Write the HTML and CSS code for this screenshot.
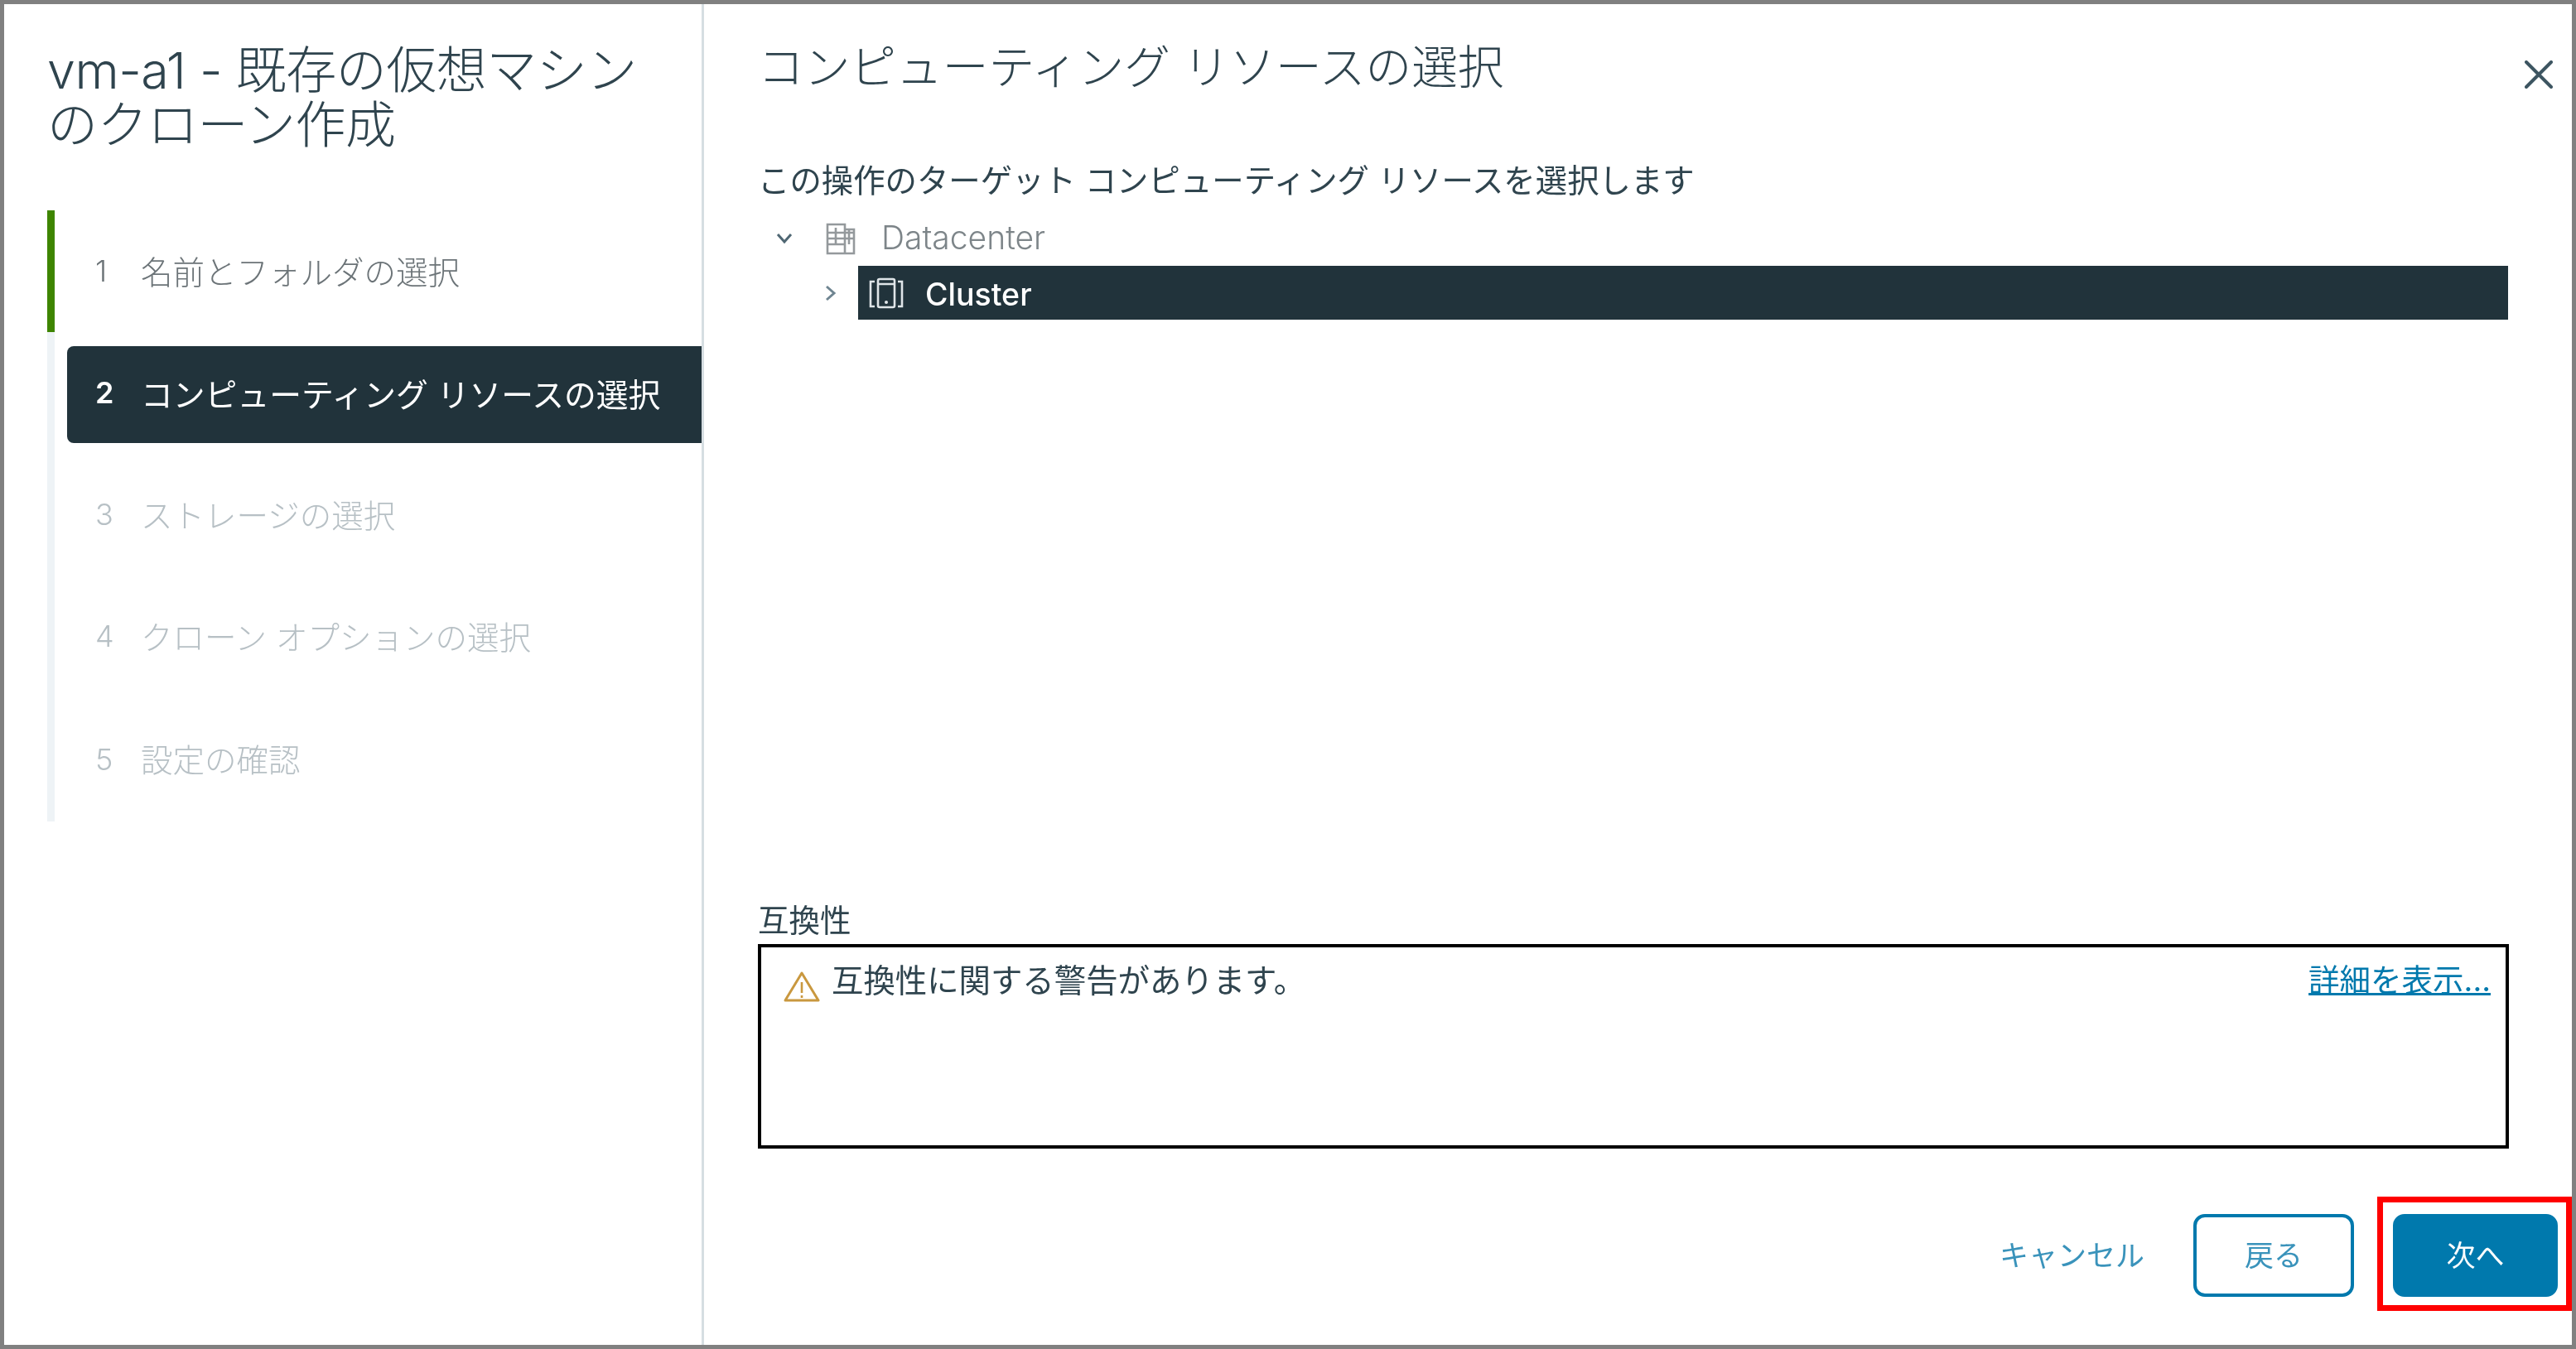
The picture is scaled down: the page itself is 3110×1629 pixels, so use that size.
FILE: index.html
```html
<!DOCTYPE html>
<html lang="ja">
<head>
<meta charset="utf-8">
<title>vm-a1 - 既存の仮想マシンのクローン作成</title>
<link rel="stylesheet" href="styles.css">
</head>
<body>
<div class="frame">
  <aside class="side">
    <h1 class="side-title">vm-a1 - 既存の仮想マシンのクローン作成</h1>
    <ol class="steps">
      <li class="step done"><div class="step-inner"><span class="num">1</span><span>名前とフォルダの選択</span></div></li>
      <li class="step active"><div class="step-inner"><span class="num">2</span><span>コンピューティング リソースの選択</span></div></li>
      <li class="step off"><div class="step-inner"><span class="num">3</span><span>ストレージの選択</span></div></li>
      <li class="step off"><div class="step-inner"><span class="num">4</span><span>クローン オプションの選択</span></div></li>
      <li class="step off"><div class="step-inner"><span class="num">5</span><span>設定の確認</span></div></li>
    </ol>
  </aside>
  <main class="main">
    <header class="head">
      <h2 class="head-title">コンピューティング リソースの選択</h2>
      <svg class="close" viewBox="0 0 34 34" width="34" height="34"><path d="M2 2 L32 32 M32 2 L2 32" fill="none" stroke="#3d5561" stroke-width="4" stroke-linecap="round"/></svg>
    </header>
    <div class="content">
      <p class="desc">この操作のターゲット コンピューティング リソースを選択します</p>
      <div class="tree">
        <div class="row row-dc">
          <svg class="chev-down" viewBox="0 0 20 14" width="20" height="14"><path d="M2 2 L10 11 L18 2" fill="none" stroke="#4f6773" stroke-width="3"/></svg>
          <svg class="ico-dc" viewBox="0 0 36 40" width="36" height="40"><path d="M2 38 V3 H23 V38 Z M23 9 H34 V38 H23 M2 13 H34 M2 20 H34 M2 27 H23 M12 7 V27 M28 9 V27" fill="none" stroke="#94999c" stroke-width="2.6"/></svg>
          <span class="dc-name">Datacenter</span>
        </div>
        <div class="row row-cl">
          <svg class="chev-right" viewBox="0 0 14 20" width="14" height="20"><path d="M2 2 L11 10 L2 18" fill="none" stroke="#6f8591" stroke-width="3"/></svg>
          <div class="cl-bar">
            <svg class="ico-cl" viewBox="0 0 42 38" width="42" height="38"><path d="M7 5 H2 V35 H7 M35 5 H40 V35 H35 M11 4 Q11 2 13 2 H29 Q31 2 31 4 V34 Q31 36 29 36 H13 Q11 36 11 34 Z M11 8 H31" fill="none" stroke="#dfe5e8" stroke-width="2.6"/><circle cx="21" cy="30" r="2" fill="#dfe5e8"/></svg>
            <span class="cl-name">Cluster</span>
          </div>
        </div>
      </div>
      <div class="compat-label">互換性</div>
      <div class="compat">
        <svg class="warn" viewBox="0 0 44 38" width="44" height="38"><path d="M22 3 L42 36 H2 Z" fill="none" stroke="#c9983f" stroke-width="3" stroke-linejoin="round"/><path d="M22 14 V27 M22 30 V33" fill="none" stroke="#c9983f" stroke-width="2.6"/></svg>
        <span class="compat-text">互換性に関する警告があります。</span>
        <a class="more" href="#">詳細を表示...</a>
      </div>
    </div>
    <footer class="foot">
      <button class="btn btn-link">キャンセル</button>
      <button class="btn btn-outline">戻る</button>
      <button class="btn btn-primary">次へ</button>
    </footer>
  </main>
  <div class="callout"></div>
</div>
</body>
</html>
```
FILE: styles.css
```css
* { box-sizing: border-box; }
html, body { margin: 0; padding: 0; background: #fff; }
body { font-family: Inter, "Noto Sans CJK JP", sans-serif; font-weight: 300; color: #2f444e; }
.frame {
  position: relative;
  width: 3110px;
  height: 1629px;
  border: 5px solid #808080;
  display: flex;
  background: #fff;
}
.side, .main { filter: blur(0.7px); }
.side {
  width: 845px;
  flex: none;
  border-right: 3px solid #d6dee2;
  padding: 47px 0 0 52px;
}
.side-title {
  margin: 0;
  width: 745px;
  font-size: 61px;
  line-height: 66px;
  font-weight: 300;
  letter-spacing: -0.5px;
}
.steps {
  list-style: none;
  margin: 70px 0 0;
  padding: 0;
}
.step {
  height: 147px;
  border-left: 9px solid #eef3f6;
  padding-left: 15px;
  display: flex;
  align-items: center;
  font-size: 38.5px;
}
.step:last-child { height: 150px; }
.step.done { border-left-color: #3e8500; color: #6c7478; }
.step.off { color: #b7c0c5; }
.step-inner {
  flex: 1;
  height: 117px;
  display: flex;
  align-items: center;
  padding: 0 0 4px 34px;
  border-radius: 8px 0 0 8px;
}
.num { width: 55px; flex: none; font-size: 36px; margin-top: 3px; }
.step.active .step-inner { background: #21333b; color: #fff; font-weight: 400; font-size: 38.8px; margin-top: 4px; padding-bottom: 6px; }
.step.active .num { font-weight: 600; font-size: 36px; margin-top: 0; }
.main {
  flex: 1;
  min-width: 0;
  display: flex;
  flex-direction: column;
  padding: 36px 17px 58px 65px;
}
.head {
  display: flex;
  justify-content: space-between;
  align-items: flex-start;
  height: 80px;
}
.head-title {
  margin: 0;
  font-size: 55.7px;
  line-height: 80px;
  font-weight: 300;
}
.close { margin: 32px 6px 0 0; }
.content {
  flex: 1;
  display: flex;
  flex-direction: column;
  margin-right: 59px;
  min-height: 0;
}
.desc {
  margin: 72px 0 0;
  font-size: 38.4px;
  line-height: 50px;
  font-weight: 400;
}
.tree { flex: 1; margin: 11px 1px 0 0; }
.row { display: flex; align-items: center; }
.row-dc { height: 67px; padding-left: 22px; }
.ico-dc { margin-left: 40px; }
.dc-name { margin: 0 0 2px 31px; font-size: 39px; color: #7d8589; }
.row-cl { height: 65px; padding-left: 81px; }
.cl-bar {
  margin-left: 26px;
  flex: 1;
  height: 65px;
  background: #21333b;
  display: flex;
  align-items: center;
  padding-left: 13px;
  color: #fff;
}
.cl-name { margin: 4px 0 0 26px; font-size: 37.5px; font-weight: 500; }
.compat-label { font-size: 37.5px; height: 50px; padding-top: 4px; line-height: 46px; font-weight: 400; }
.compat {
  margin-top: 5px;
  height: 247px;
  border: 4px solid #000;
  display: flex;
  align-items: flex-start;
  padding: 18px 18px 0 27px;
  font-size: 38.4px;
  line-height: 44px;
  font-weight: 400;
}
.warn { margin-top: 10px; flex: none; }
.compat-text { margin-left: 14px; }
.more { margin-left: auto; color: #0079ad; font-size: 37.5px; text-decoration: underline; }
.foot {
  margin-top: 79px;
  display: flex;
  justify-content: flex-end;
  align-items: center;
  height: 100px;
}
.btn {
  font: inherit;
  font-size: 35px;
  font-weight: 400;
  height: 100px;
  border-radius: 14px;
  padding: 0 0 6px;
  background: none;
  border: 4px solid transparent;
  color: #3a93bb;
}
.btn-link { width: 175px; margin-right: 59px; border: 0; }
.btn-outline { width: 194px; margin-right: 47px; border-color: #0079ad; }
.btn-primary { width: 199px; background: #0079ad; border-color: #0079ad; color: #fff; }
.callout {
  position: absolute;
  left: 2865px;
  top: 1440px;
  width: 235px;
  height: 138px;
  border: 7px solid #ff0000;
}
```
